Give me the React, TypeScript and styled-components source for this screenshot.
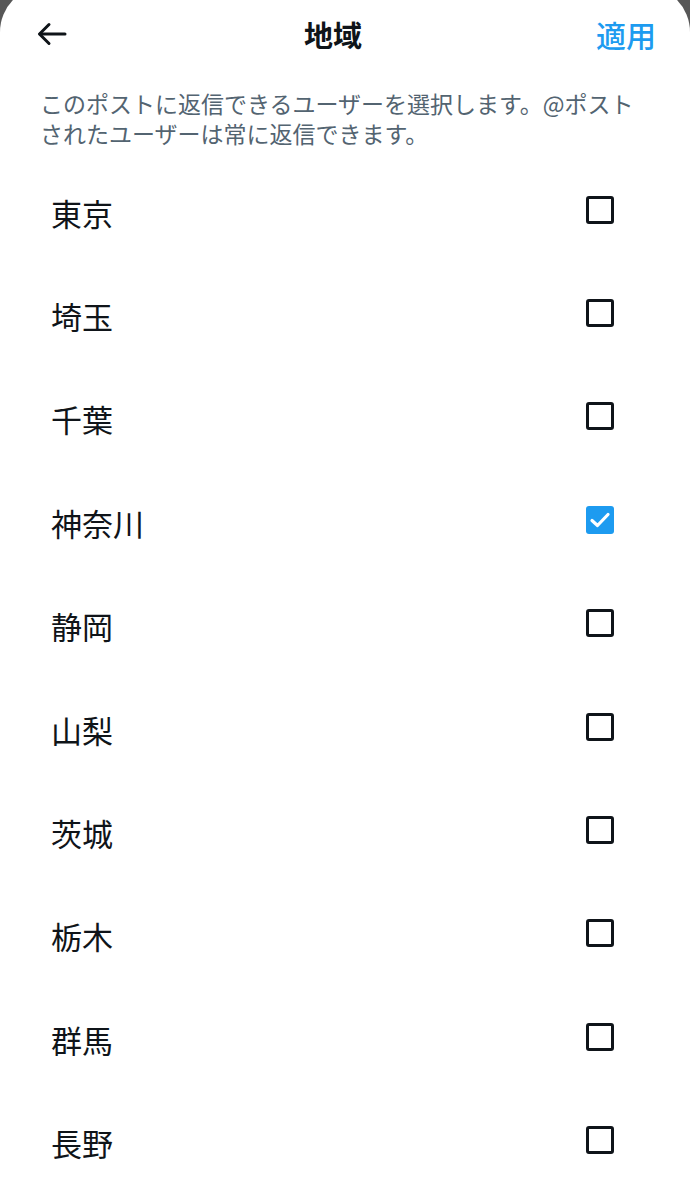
import React, { useState } from "react";
import styled, { createGlobalStyle } from "styled-components";

const GlobalStyle = createGlobalStyle`
  html, body {
    margin: 0;
    padding: 0;
    background: #575757;
  }
  body {
    font-family: "Noto Sans CJK JP", "Noto Sans", sans-serif;
    overflow: hidden;
  }
`;

const Sheet = styled.div`
  margin-top: -14px;
  background: #ffffff;
  border-radius: 46px 46px 0 0;
  min-height: 1230px;
  display: flex;
  flex-direction: column;
`;

const Header = styled.header`
  box-sizing: border-box;
  height: 84px;
  padding: 12px 34px 0 36px;
  display: grid;
  grid-template-columns: 1fr auto 1fr;
  align-items: center;
`;

const BackButton = styled.button`
  justify-self: start;
  background: none;
  border: none;
  padding: 0;
  width: 32px;
  height: 32px;
  display: flex;
  align-items: center;
  justify-content: center;
  color: #0f1419;
`;

const Title = styled.h1`
  margin: 0 26px 0 0;
  font-size: 29px;
  font-weight: 700;
  color: #0f1419;
  line-height: 1;
`;

const Apply = styled.button`
  justify-self: end;
  background: none;
  border: none;
  padding: 0;
  font-family: inherit;
  font-size: 30px;
  font-weight: 500;
  color: #1d9bf0;
  line-height: 1;
`;

const Description = styled.p`
  margin: 18px 0 0 40px;
  max-width: 615px;
  font-size: 23px;
  line-height: 30px;
  color: #536471;
`;

const List = styled.ul`
  list-style: none;
  margin: 10px 0 0;
  padding: 0;
`;

const Row = styled.li`
  box-sizing: border-box;
  height: 103.4px;
  padding: 0 76px 0 51px;
  display: flex;
  align-items: center;
  justify-content: space-between;
`;

const Label = styled.span`
  font-size: 31px;
  color: #0f1419;
  line-height: 1;
  padding-top: 5px;
`;

const Box = styled.span<{ $checked: boolean }>`
  box-sizing: border-box;
  width: 28px;
  height: 28px;
  border-radius: 3px;
  border: ${(p) => (p.$checked ? "none" : "3px solid #0f1419")};
  background: ${(p) => (p.$checked ? "#1d9bf0" : "transparent")};
  display: flex;
  align-items: center;
  justify-content: center;
`;

const regions = ["東京", "埼玉", "千葉", "神奈川", "静岡", "山梨", "茨城", "栃木", "群馬", "長野"];

export default function App() {
  const [checked, setChecked] = useState<Record<string, boolean>>({ 神奈川: true });
  return (
    <>
      <GlobalStyle />
      <Sheet>
        <Header>
          <BackButton aria-label="戻る">
            <svg width="30" height="24" viewBox="0 0 30 24" fill="none" stroke="#0f1419" strokeWidth="3" strokeLinecap="round" strokeLinejoin="round">
              <path d="M28 12H3" />
              <path d="M12 2.5L2.5 12L12 21.5" />
            </svg>
          </BackButton>
          <Title>地域</Title>
          <Apply>適用</Apply>
        </Header>
        <Description>
          このポストに返信できるユーザーを選択します。@ポストされたユーザーは常に返信できます。
        </Description>
        <List>
          {regions.map((r) => (
            <Row key={r} onClick={() => setChecked((c) => ({ ...c, [r]: !c[r] }))}>
              <Label>{r}</Label>
              <Box $checked={!!checked[r]}>
                {checked[r] && (
                  <svg width="22" height="18" viewBox="0 0 22 18" fill="none" stroke="#fff" strokeWidth="3.2" strokeLinecap="round" strokeLinejoin="round">
                    <path d="M3 9.5L8.5 14.5L19 3.5" />
                  </svg>
                )}
              </Box>
            </Row>
          ))}
        </List>
      </Sheet>
    </>
  );
}
